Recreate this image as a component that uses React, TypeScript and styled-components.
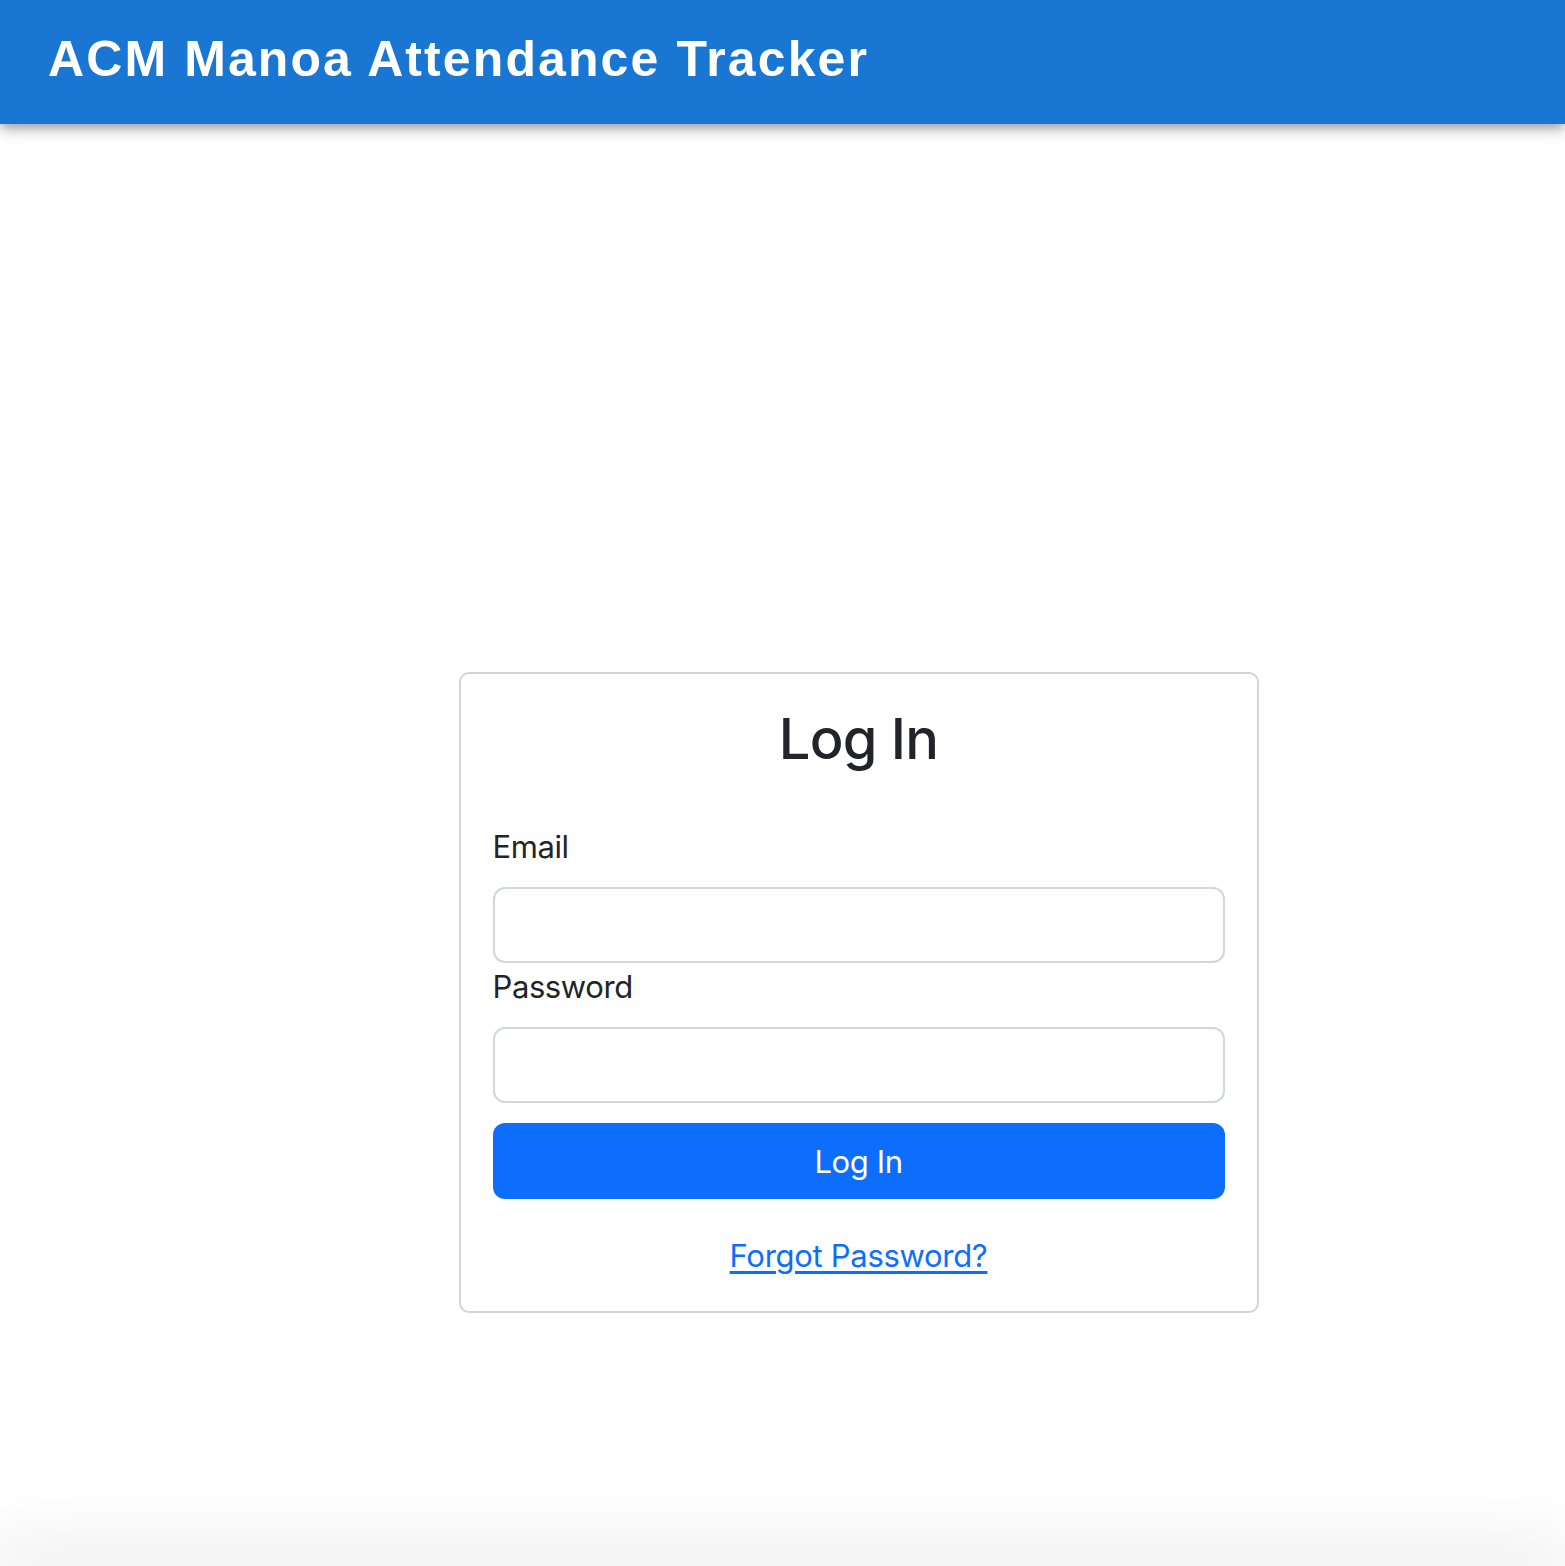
import React, { useState } from "react";
import styled, { createGlobalStyle } from "styled-components";

const GlobalStyle = createGlobalStyle`
  * {
    box-sizing: border-box;
  }
  body {
    margin: 0;
    background: #ffffff;
    font-family: Inter, "Noto Sans", sans-serif;
    color: #212529;
  }
`;

const Page = styled.div`
  display: flex;
  flex-direction: column;
  min-height: 100vh;
  overflow: hidden;
`;

const AppBar = styled.header`
  display: flex;
  align-items: center;
  height: 124px;
  padding: 0 48px 6px;
  background: #1976d2;
  box-shadow: 0 4px 8px -2px rgba(0, 0, 0, 0.2), 0 8px 10px 0 rgba(0, 0, 0, 0.14),
    0 2px 20px 0 rgba(0, 0, 0, 0.12);
  position: relative;
  z-index: 1;
`;

const AppTitle = styled.h1`
  margin: 0;
  color: #ffffff;
  font-family: "Liberation Sans", Arial, sans-serif;
  font-weight: 700;
  font-size: 50px;
  letter-spacing: 2.1px;
  line-height: 1;
`;

const Main = styled.main`
  flex: 1;
  display: flex;
  justify-content: center;
  align-items: flex-start;
  padding: 548px 0 0 152px;
`;

const Card = styled.section`
  width: 800px;
  padding: 32px;
  border: 2px solid #d4d4d4;
  border-radius: 10px;
  background: #ffffff;
  display: flex;
  flex-direction: column;
`;

const CardTitle = styled.h3`
  margin: 0 0 50px;
  text-align: center;
  font-size: 56px;
  font-weight: 500;
  line-height: 1.2;
  letter-spacing: -0.8px;
`;

const Form = styled.form`
  display: flex;
  flex-direction: column;
`;

const Label = styled.label`
  display: block;
  margin-bottom: 16px;
  font-size: 31px;
  line-height: 48px;
  letter-spacing: -0.4px;
`;

const Input = styled.input`
  display: block;
  width: 100%;
  height: 76px;
  padding: 12px 24px;
  font: inherit;
  font-size: 32px;
  border: 2px solid #d3d6da;
  border-radius: 12px;
  outline: none;
  background: #ffffff;
`;

const SubmitButton = styled.button`
  margin-top: 20px;
  height: 76px;
  width: 100%;
  border: none;
  border-radius: 12px;
  background: #0d6efd;
  color: #ffffff;
  font-family: inherit;
  font-size: 31px;
  letter-spacing: -0.4px;
  cursor: pointer;
`;

const LinkRow = styled.div`
  margin-top: 33px;
  text-align: center;
  font-size: 31px;
  line-height: 47px;
`;

const ForgotLink = styled.a`
  color: #0d6efd;
  letter-spacing: -0.3px;
  text-decoration: underline;
  text-underline-offset: 4px;
`;

const Footer = styled.footer`
  height: 0;
  margin: 0 12px;
  border-radius: 30px;
  box-shadow: 0 0 70px 22px rgba(0, 0, 0, 0.09);
`;

export default () => {
  const [email, setEmail] = useState("");
  const [password, setPassword] = useState("");

  return (
    <>
      <GlobalStyle />
      <Page>
        <AppBar>
          <AppTitle>ACM Manoa Attendance Tracker</AppTitle>
        </AppBar>
        <Main>
          <Card>
            <CardTitle>Log In</CardTitle>
            <Form onSubmit={(e) => e.preventDefault()}>
              <Label htmlFor="email">Email</Label>
              <Input
                id="email"
                type="email"
                value={email}
                onChange={(e) => setEmail(e.target.value)}
              />
              <Label htmlFor="password">Password</Label>
              <Input
                id="password"
                type="password"
                value={password}
                onChange={(e) => setPassword(e.target.value)}
              />
              <SubmitButton type="submit">Log In</SubmitButton>
            </Form>
            <LinkRow>
              <ForgotLink href="#">Forgot Password?</ForgotLink>
            </LinkRow>
          </Card>
        </Main>
        <Footer />
      </Page>
    </>
  );
};
